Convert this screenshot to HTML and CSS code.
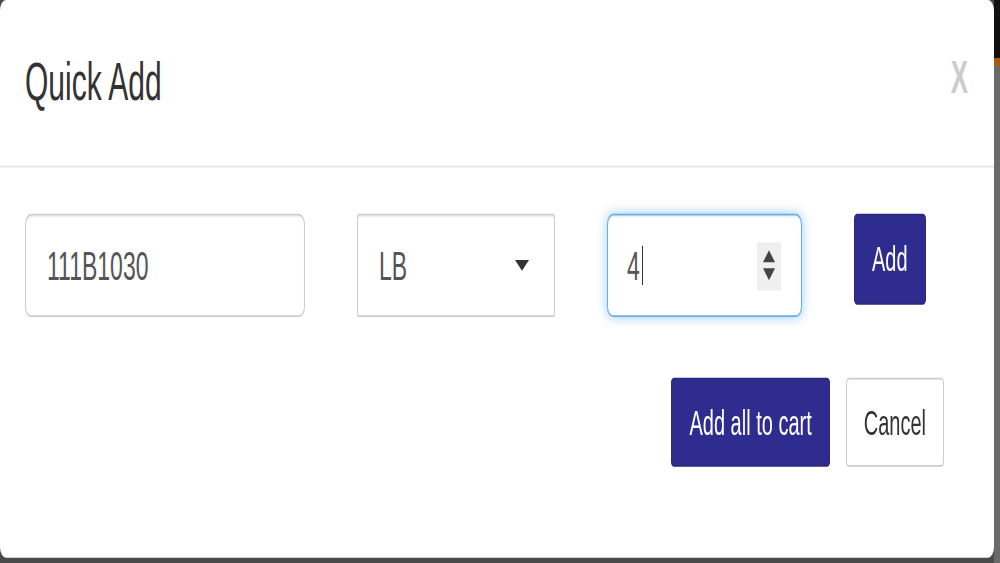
FILE: index.html
```html
<!DOCTYPE html>
<html lang="en">
<head>
  <meta charset="UTF-8">
  <title>Quick Add</title>
  <link rel="stylesheet" href="styles.css">
</head>
<body>
  <!-- the capture is stretched vertically, so the stage is laid out at its natural height and scaled -->
  <div class="stage">
    <div class="modal">
      <div class="modal-header">
        <h4 class="modal-title">Quick Add</h4>
        <button class="close" type="button">X</button>
      </div>
      <div class="modal-body">
        <div class="quick-row">
          <input class="field item" type="text" value="111B1030">
          <div class="select-wrap">
            <select class="field unit">
              <option>LB</option>
              <option>EA</option>
            </select>
          </div>
          <div class="field qty">
            <span class="qty-value">4</span><span class="caret"></span>
            <span class="spinner">
              <svg width="24" height="27" viewBox="0 0 24 27">
                <polygon points="6,11.2 18,11.2 12,4.5" fill="#444"/>
                <polygon points="6,14.6 18,14.6 12,21.3" fill="#444"/>
              </svg>
            </span>
          </div>
          <button class="btn btn-primary" type="button">Add</button>
        </div>
        <div class="actions">
          <button class="btn btn-primary" type="button">Add all to cart</button>
          <button class="btn btn-default" type="button">Cancel</button>
        </div>
      </div>
    </div>
    <div class="edge"></div>
  </div>
</body>
</html>
```

FILE: styles.css
```css
html, body {
  height: 100%;
}
body {
  margin: 0;
  background: #4a4a4a;
  font-family: "Liberation Sans", Arial, sans-serif;
}
.stage {
  width: 1000px;
  height: 316px;
  display: flex;
  transform: scaleY(1.7816);
  transform-origin: 0 0;
}
.modal {
  width: 994px;
  height: 313px;
  background: white;
  border-radius: 6px;
  box-sizing: border-box;
}
.edge {
  width: 6px;
  height: 316px;
  background: linear-gradient(#111 0, #111 32.6px, #a85a10 32.6px, #a85a10 37px, #6a6a6a 37px);
}
.modal-header {
  display: flex;
  justify-content: space-between;
  align-items: flex-start;
  padding: 29px 26px 31px 25px;
  border-bottom: 1px solid #e5e5e5;
}
.modal-title {
  margin: 0;
  font-size: 30px;
  font-weight: normal;
  line-height: 33px;
  color: #333;
}
.close {
  margin-top: 1px;
  padding: 0;
  border: 0;
  background: none;
  font-family: inherit;
  font-size: 26px;
  font-weight: bold;
  line-height: 1;
  color: #ccc;
}
.modal-body {
  padding: 26px 50px 0 25px;
}
.quick-row {
  display: flex;
  align-items: flex-start;
  gap: 52px;
}
.field {
  height: 58px;
  box-sizing: border-box;
  border: 1px solid #ccc;
  border-radius: 6px;
  background: white;
  box-shadow: inset 0 1px 1px rgba(0,0,0,0.075);
  font-family: inherit;
  font-size: 23px;
  color: #555;
}
.item {
  width: 280px;
  padding: 0 21px;
}
.select-wrap {
  position: relative;
}
.select-wrap::after {
  content: "";
  position: absolute;
  right: 26px;
  top: 26.4px;
  border-left: 7px solid transparent;
  border-right: 7px solid transparent;
  border-top: 6.7px solid #333;
}
.unit {
  width: 198px;
  padding: 0 21px;
  border-radius: 2px;
  appearance: none;
  -webkit-appearance: none;
}
.qty {
  width: 195px;
  display: flex;
  align-items: center;
  padding: 0 20px 0 19px;
  border-color: #66afe9;
  box-shadow: inset 0 1px 1px rgba(0,0,0,0.075), 0 0 8px rgba(102,175,233,0.6);
}
.caret {
  width: 1.5px;
  height: 22.5px;
  margin-left: 2px;
  background: #333;
}
.spinner {
  display: flex;
  margin-left: auto;
  background: #efefef;
}
.btn {
  height: 50.5px;
  padding: 0 17px;
  border: 1px solid transparent;
  border-radius: 3px;
  font-family: inherit;
  font-size: 20px;
  line-height: 1;
}
.btn-primary {
  background: #2e2c8e;
  border-color: #2a287f;
  color: white;
}
.btn-default {
  background: white;
  border-color: #ccc;
  color: #333;
}
.actions {
  display: flex;
  justify-content: flex-end;
  gap: 16px;
  margin-top: 33.7px;
}
```
